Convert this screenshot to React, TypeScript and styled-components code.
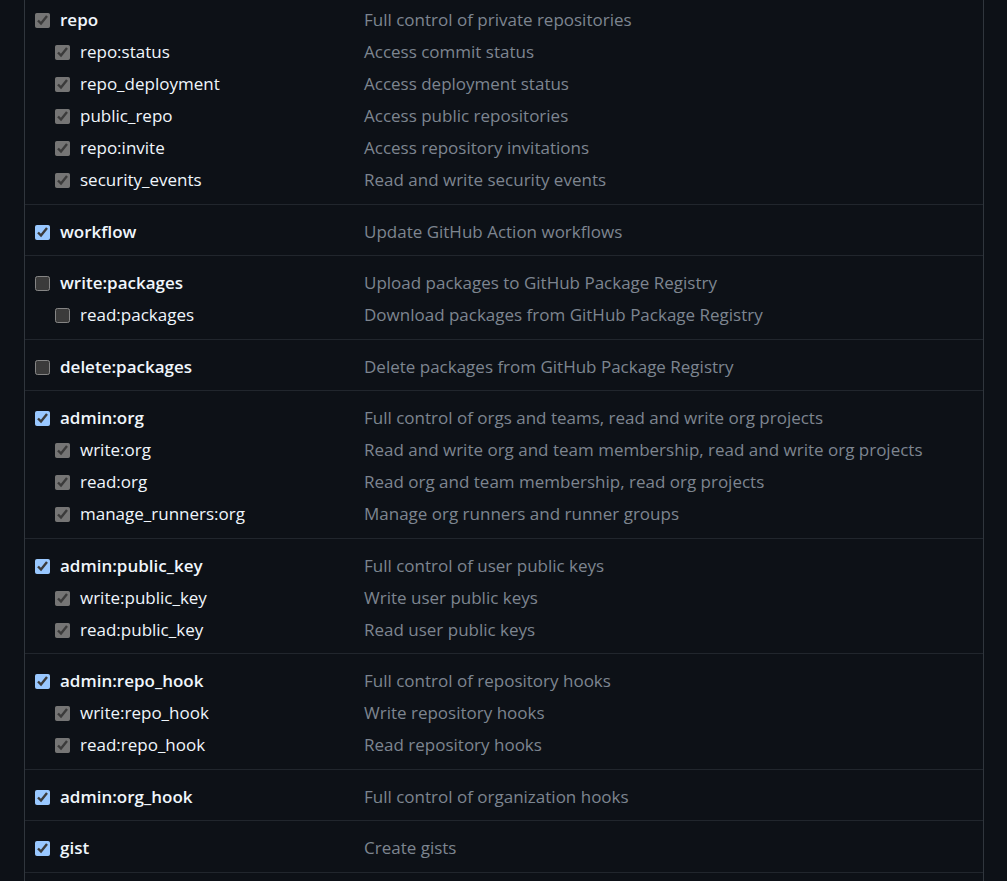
import React from 'react';
import styled, { createGlobalStyle } from 'styled-components';

type Item = { name: string; description: string; checked?: boolean; disabled?: boolean };

const on = (name: string, description: string): Item => ({ name, description, checked: true });
const off = (name: string, description: string): Item => ({ name, description });
const locked = (name: string, description: string): Item => ({ name, description, checked: true, disabled: true });

const groups: Item[][] = [
  [
    locked('repo', 'Full control of private repositories'),
    locked('repo:status', 'Access commit status'),
    locked('repo_deployment', 'Access deployment status'),
    locked('public_repo', 'Access public repositories'),
    locked('repo:invite', 'Access repository invitations'),
    locked('security_events', 'Read and write security events'),
  ],
  [on('workflow', 'Update GitHub Action workflows')],
  [
    off('write:packages', 'Upload packages to GitHub Package Registry'),
    off('read:packages', 'Download packages from GitHub Package Registry'),
  ],
  [off('delete:packages', 'Delete packages from GitHub Package Registry')],
  [
    on('admin:org', 'Full control of orgs and teams, read and write org projects'),
    locked('write:org', 'Read and write org and team membership, read and write org projects'),
    locked('read:org', 'Read org and team membership, read org projects'),
    locked('manage_runners:org', 'Manage org runners and runner groups'),
  ],
  [
    on('admin:public_key', 'Full control of user public keys'),
    locked('write:public_key', 'Write user public keys'),
    locked('read:public_key', 'Read user public keys'),
  ],
  [
    on('admin:repo_hook', 'Full control of repository hooks'),
    locked('write:repo_hook', 'Write repository hooks'),
    locked('read:repo_hook', 'Read repository hooks'),
  ],
  [on('admin:org_hook', 'Full control of organization hooks')],
  [on('gist', 'Create gists')],
];

const GlobalStyle = createGlobalStyle`
  * { box-sizing: border-box; }
  body {
    margin: 0;
    background: #0d1117;
    color: #f0f6fc;
    color-scheme: dark;
    font-family: "Segoe UI", "Open Sans", "Noto Sans", sans-serif;
    font-size: 17px;
    line-height: 32px;
  }
`;

const Page = styled.main`
  padding: 0 23px 0 24px;
`;

const Panel = styled.div`
  min-height: 100vh;
  border: solid #30363d;
  border-width: 0 1px;
`;

const Group = styled.ul`
  margin: 0;
  padding: 11px 10px 8px;
  list-style: none;
  border-bottom: 1px solid #21262d;

  &:nth-child(even) {
    padding-bottom: 7px;
  }

  &:first-child {
    padding-top: 4px;
  }
`;

const Row = styled.li`
  display: grid;
  grid-template-columns: 329px 1fr;
`;

const Scope = styled.label<{ $child: boolean }>`
  display: flex;
  align-items: center;
  gap: 10px;
  padding-left: ${({ $child }) => ($child ? 20 : 0)}px;
  font-weight: ${({ $child }) => ($child ? 400 : 600)};
`;

const Checkbox = styled.input`
  width: 15px;
  height: 15px;
  margin: 0;
`;

const Description = styled.span`
  color: #7d8590;
`;

export default function App() {
  return (
    <Page>
      <GlobalStyle />
      <Panel>
        {groups.map((items) => (
          <Group key={items[0].name}>
            {items.map((item, i) => (
              <Row key={item.name}>
                <Scope $child={i > 0}>
                  <Checkbox
                    type="checkbox"
                    defaultChecked={item.checked}
                    disabled={item.disabled}
                    aria-describedby={`about-${item.name}`}
                  />
                  {item.name}
                </Scope>
                <Description id={`about-${item.name}`}>{item.description}</Description>
              </Row>
            ))}
          </Group>
        ))}
      </Panel>
    </Page>
  );
}
